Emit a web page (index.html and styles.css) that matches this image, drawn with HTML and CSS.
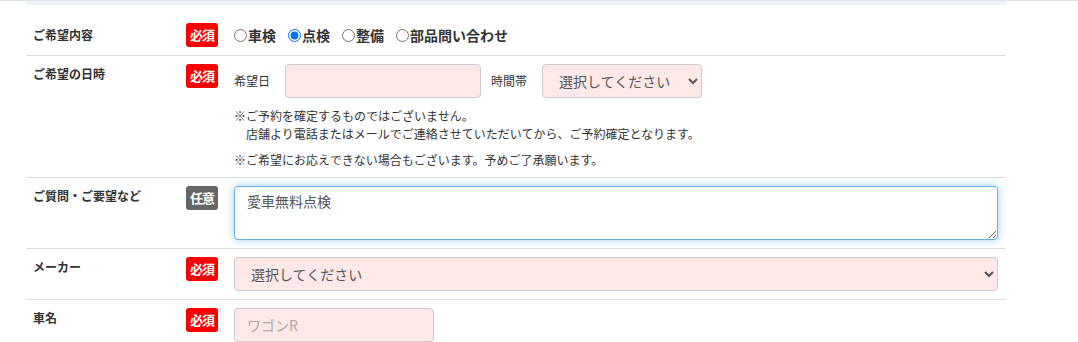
FILE: index.html
```html
<!DOCTYPE html>
<html lang="ja">
<head>
<meta charset="utf-8">
<title>お問い合わせ</title>
<link rel="stylesheet" href="styles.css">
</head>
<body>
<div class="page">
  <div class="topband"></div>
  <div class="form">
    <div class="row row-first">
      <div class="label">ご希望内容</div>
      <div class="badge req">必須</div>
      <div class="field radios">
        <label class="radio"><input type="radio" name="kind">車検</label>
        <label class="radio"><input type="radio" name="kind" checked>点検</label>
        <label class="radio"><input type="radio" name="kind">整備</label>
        <label class="radio"><input type="radio" name="kind">部品問い合わせ</label>
      </div>
    </div>
    <div class="row">
      <div class="label">ご希望の日時</div>
      <div class="badge req">必須</div>
      <div class="field">
        <div class="datetime">
          <span class="sublabel">希望日</span>
          <input class="ctrl date" type="text">
          <span class="sublabel">時間帯</span>
          <select class="ctrl sel time"><option>選択してください</option></select>
        </div>
        <p class="note">※ご予約を確定するものではございません。<br>店舗より電話またはメールでご連絡させていただいてから、ご予約確定となります。</p>
        <p class="note">※ご希望にお応えできない場合もございます。予めご了承願います。</p>
      </div>
    </div>
    <div class="row">
      <div class="label">ご質問・ご要望など</div>
      <div class="badge opt">任意</div>
      <div class="field">
        <textarea class="ctrl area">愛車無料点検</textarea>
      </div>
    </div>
    <div class="row">
      <div class="label">メーカー</div>
      <div class="badge req">必須</div>
      <div class="field">
        <select class="ctrl sel wide"><option>選択してください</option></select>
      </div>
    </div>
    <div class="row">
      <div class="label">車名</div>
      <div class="badge req">必須</div>
      <div class="field">
        <input class="ctrl car" type="text" placeholder="ワゴンR">
      </div>
    </div>
  </div>
</div>
</body>
</html>
```
FILE: styles.css
```css
html, body {
  margin: 0;
  padding: 0;
  background: #fff;
}
body {
  border-top: 1px solid #e0e0e0;
  font-family: "Noto Sans CJK JP", "Noto Sans", sans-serif;
  color: #333;
  overflow: hidden;
}
.page {
  width: 980px;
  margin-left: 26px;
}
.topband {
  height: 5px;
  margin-top: -1px;
  background: #edf4fc;
}
.row {
  display: grid;
  grid-template-columns: 153px 48px 764px;
  padding: 8px 8px 8px 7px;
  border-bottom: 1px solid #dcdcdc;
  align-items: start;
}
.row-first {
  padding-top: 18px;
  align-items: center;
}
.label {
  font-size: 12px;
  font-weight: bold;
  line-height: 20px;
  color: #333;
}
.badge {
  width: 32px;
  height: 24px;
  border-radius: 3px;
  color: #fff;
  font-size: 13px;
  font-weight: bold;
  line-height: 24px;
  text-align: center;
  letter-spacing: -1px;
}
.req { background: #fa0000; }
.opt { background: #666; }
.radios {
  display: flex;
  gap: 12px;
  align-items: center;
}
.radio {
  display: flex;
  align-items: center;
  font-size: 14px;
  font-weight: bold;
  line-height: 22px;
  color: #333;
}
.radio input {
  width: 13px;
  height: 13px;
  margin: 0 1px 0 0;
}
.datetime {
  display: flex;
  align-items: center;
}
.sublabel {
  font-size: 12px;
  line-height: 18px;
  margin-right: 15px;
}
.ctrl {
  box-sizing: border-box;
  height: 34px;
  border: 1px solid #ccc;
  border-radius: 4px;
  background-color: #ffe8e8;
  font-family: "Noto Sans CJK JP", "Noto Sans", sans-serif;
  font-size: 14px;
  color: #555;
  padding: 0 12px;
  outline: none;
}
.date {
  width: 196px;
  margin-right: 10px;
}
.time {
  width: 160px;
}
.sel {
  padding-left: 12px;
}
.note {
  margin: 9px 0 0 0;
  font-size: 12px;
  line-height: 18px;
  padding-left: 12px;
  text-indent: -12px;
}
.note + .note {
  margin-top: 8px;
}
.area {
  display: block;
  width: 764px;
  height: 54px;
  background: #fff;
  border-color: #66afe9;
  box-shadow: 0 0 8px rgba(102, 175, 233, 0.6);
  padding: 4px 12px;
  line-height: 20px;
  color: #555;
  resize: vertical;
}
.wide {
  width: 764px;
}
.car {
  width: 200px;
}
.car::placeholder {
  color: #aaa;
}
```
